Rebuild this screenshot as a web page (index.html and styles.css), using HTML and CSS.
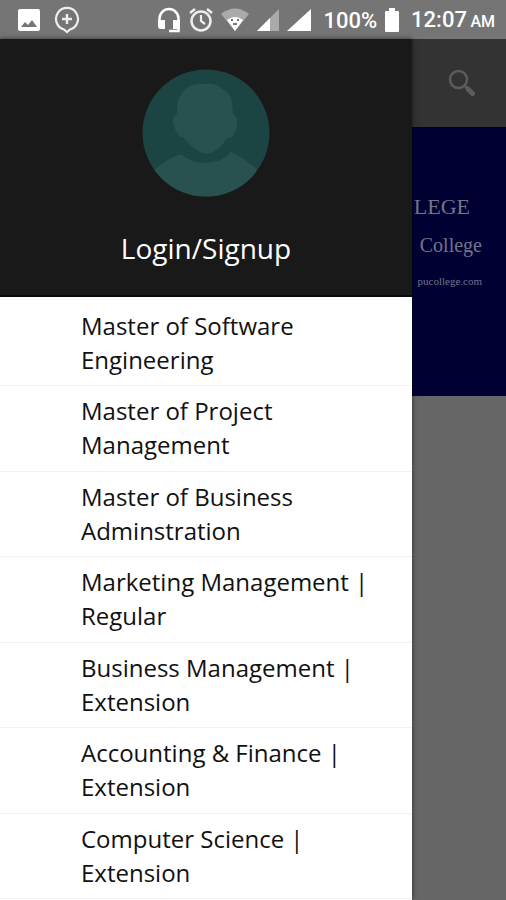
FILE: index.html
```html
<!DOCTYPE html>
<html lang="en">
<head>
<meta charset="utf-8">
<meta name="viewport" content="width=device-width, initial-scale=1">
<title>Login/Signup</title>
<link rel="stylesheet" href="styles.css">
</head>
<body>
<header class="status">
  <div class="status-left">
    <svg width="22" height="22" viewBox="0 0 22 22" aria-hidden="true"><path fill="#fff" fill-rule="evenodd" d="M2 0h18q2 0 2 2v18q0 2-2 2H2q-2 0-2-2V2Q0 0 2 0ZM3 18h16l-5-7-4 5-3-3Z"/></svg>
    <svg width="26" height="28" viewBox="0 0 26 28" fill="none" stroke="#eee" aria-hidden="true"><path stroke-width="2.2" d="M10 23.5A11 11 0 1 1 16 23.5L13 26Z"/><path stroke-width="2.4" d="M13 8v10M8 13h10"/></svg>
  </div>
  <div class="status-right">
    <svg width="24" height="26" viewBox="0 0 24 26" aria-hidden="true"><path fill="none" stroke="#fff" stroke-width="2.500" d="M2.500 15V11.500a9.500 9.500 0 0 1 19 0V24H12"/><path fill="#fff" d="M1 13h7v9H4q-3 0-3-3ZM16 13h7v9h-7Z"/></svg>
    <svg width="24" height="26" viewBox="0 0 24 26" fill="none" stroke="#eee" aria-hidden="true"><circle cx="12" cy="14" r="9.500" stroke-width="2.500"/><path stroke-width="2.200" d="M12 8v6l4 3"/><path stroke-width="2.500" d="M1 6l5-4M18 2l5 4"/></svg>
    <svg width="28" height="24" viewBox="0 0 28 24" aria-hidden="true"><path fill="#aaa" d="M0 6Q14-5 28 6L14 23Z"/><path fill="#fff" d="M6 12Q14 6 22 12L14 23Z"/><path fill="#777" d="M10 11h2v2h-2zM16 11h2v2h-2zM12 15h4v2h-4z"/></svg>
    <svg width="22" height="24" viewBox="0 0 22 24" aria-hidden="true"><path fill="#aaa" d="M22 1v22H0Z"/><path fill="#fff" d="M13 10v13H0Z"/></svg>
    <svg width="24" height="24" viewBox="0 0 24 24" aria-hidden="true"><path fill="#fff" d="M24 1v22H0Z"/></svg>
    <span class="percent">100%</span>
    <svg width="14" height="24" viewBox="0 0 14 24" aria-hidden="true"><path fill="#fff" d="M4 0h6v3h3q1 0 1 1v19q0 1-1 1H1q-1 0-1-1V4q0-1 1-1h3Z"/></svg>
    <span class="clock">12:07 <small>AM</small></span>
  </div>
</header>
<div class="app">
  <nav class="drawer">
    <div class="account">
      <svg class="avatar" viewBox="0 0 128 128" aria-hidden="true">
        <defs><clipPath id="disc"><circle cx="64" cy="64" r="63.500"/></clipPath></defs>
        <circle cx="64" cy="64" r="63.500" fill="#1c4442"/>
        <g fill="#285150" clip-path="url(#disc)">
          <path d="M48 17Q56 14 64 15Q74 14 80 20Q89 24 90 34L91 45Q96 48 95 53Q95 62 90 68L85 69Q79 79 71 83Q63 87 55 81Q47 76 42 69L37 67Q31 58 31 51Q32 47 35 45Q34 31 40 24Q43 20 48 17Z"/>
          <path d="M5 108Q21 91 39 85Q49 94 64 94Q79 94 89 83Q106 91 123 108V128H5Z"/>
        </g>
      </svg>
      <a class="login" href="#login">Login/Signup</a>
    </div>
    <ul class="courses">
      <li><a href="#software">Master of Software Engineering</a></li>
      <li><a href="#project">Master of Project Management</a></li>
      <li><a href="#business">Master of Business Adminstration</a></li>
      <li><a href="#marketing">Marketing Management | Regular</a></li>
      <li><a href="#management">Business Management | Extension</a></li>
      <li><a href="#accounting">Accounting &amp; Finance | Extension</a></li>
      <li><a href="#computer">Computer Science | Extension</a></li>
    </ul>
  </nav>
  <main class="page">
    <div class="toolbar">
      <button class="search" type="button" aria-label="Search">
        <svg width="28" height="28" viewBox="0 0 28 28" fill="none" stroke="#5c5c5c" aria-hidden="true"><circle cx="10.500" cy="10.500" r="8.500" stroke-width="2.500"/><path stroke-width="2.500" d="M16 16l4 4"/><path stroke-width="5" stroke-linecap="round" d="M20 20l4.500 4.500"/></svg>
      </button>
    </div>
    <div class="banner">
      <p class="name">LEGE</p>
      <p class="kind">College</p>
      <p class="site">pucollege.com</p>
    </div>
  </main>
</div>
</body>
</html>
```
FILE: styles.css
```css
* {
  box-sizing: border-box;
}

body {
  margin: 0;
  min-height: 100vh;
  display: flex;
  flex-direction: column;
  background: #666;
  font-family: "Open Sans", "Noto Sans", sans-serif;
}

a {
  color: inherit;
  text-decoration: none;
}

svg {
  display: block;
  flex: none;
}

.status {
  height: 39px;
  padding: 0 11px 0 18px;
  display: flex;
  align-items: center;
  justify-content: space-between;
  background: #757575;
  color: #fff;
  font: 500 22px/39px Roboto, sans-serif;
}

.status-left {
  display: flex;
  align-items: center;
  gap: 14px;
}

.status-right {
  display: flex;
  align-items: center;
  gap: 8px;
  white-space: nowrap;
}

.percent,
.clock {
  margin-left: 4px;
  padding-top: 2px;
}

.clock small {
  margin-left: -2px;
  font-size: 16px;
}

.app {
  flex: 1;
  display: grid;
  grid-template-columns: minmax(0, 1fr) 94px;
}

.drawer {
  display: flex;
  flex-direction: column;
  background: #fff;
  box-shadow: 0 0 5px rgba(0, 0, 0, 0.6);
  z-index: 1;
}

.account {
  height: 258px;
  padding-top: 30px;
  display: flex;
  flex-direction: column;
  align-items: center;
  gap: 32px;
  background: #191919;
  border-bottom: 2px solid #080808;
}

.avatar {
  width: 128px;
  height: 128px;
}

.login {
  color: #fff;
  font-size: 28px;
  line-height: 38px;
}

.courses {
  flex: 1;
  margin: 0;
  padding: 4px 0 1px;
  display: grid;
  grid-auto-rows: 1fr;
  list-style: none;
  color: #111;
  font-size: 24px;
  line-height: 34px;
}

.courses li {
  padding: 8px 32px 8px 81px;
  border-bottom: 1px solid #f2f2f2;
}

.courses a {
  display: block;
  max-width: 294px;
}

.page {
  min-width: 0;
}

.toolbar {
  height: 88px;
  padding-right: 24px;
  display: flex;
  align-items: center;
  justify-content: flex-end;
  background: #333;
}

.search {
  padding: 6px;
  border: 0;
  background: none;
}

.banner {
  height: 269px;
  padding: 60px 24px 0 0;
  display: flex;
  flex-direction: column;
  align-items: flex-end;
  background: #000033;
  color: #74748a;
  font-family: "Liberation Serif", serif;
  white-space: nowrap;
}

.banner p {
  margin: 0;
}

.name {
  padding-right: 12px;
  font-size: 22px;
  line-height: 40px;
}

.kind {
  font-size: 20px;
  line-height: 36px;
}

.site {
  font-size: 11px;
  line-height: 36px;
}
```
